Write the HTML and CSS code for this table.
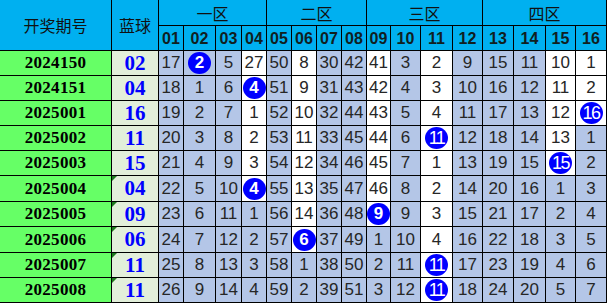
FILE: index.html
```html
<!DOCTYPE html>
<html lang="zh">
<head>
<meta charset="utf-8">
<link rel="stylesheet" href="styles.css">
</head>
<body>
<div class="sheet">
  <div class="h head-period">开奖期号</div>
  <div class="h head-blue">蓝球</div>
  <div class="h zone z1">一区</div>
  <div class="h zone z2">二区</div>
  <div class="h zone z3">三区</div>
  <div class="h zone z4">四区</div>
  <div class="h num">01</div><div class="h num">02</div><div class="h num">03</div><div class="h num">04</div>
  <div class="h num">05</div><div class="h num">06</div><div class="h num">07</div><div class="h num">08</div>
  <div class="h num">09</div><div class="h num">10</div><div class="h num">11</div><div class="h num">12</div>
  <div class="h num">13</div><div class="h num">14</div><div class="h num">15</div><div class="h num">16</div>

  <div class="p">2024150</div><div class="bl">02</div>
  <div class="c">17</div><div class="c"><span class="ball">2</span></div><div class="c">5</div><div class="c w">27</div>
  <div class="c">50</div><div class="c w">8</div><div class="c">30</div><div class="c">42</div>
  <div class="c w">41</div><div class="c">3</div><div class="c w">2</div><div class="c">9</div>
  <div class="c">15</div><div class="c">11</div><div class="c w">10</div><div class="c w">1</div>

  <div class="p">2024151</div><div class="bl">04</div>
  <div class="c">18</div><div class="c">1</div><div class="c">6</div><div class="c w"><span class="ball">4</span></div>
  <div class="c">51</div><div class="c w">9</div><div class="c">31</div><div class="c">43</div>
  <div class="c w">42</div><div class="c">4</div><div class="c w">3</div><div class="c">10</div>
  <div class="c">16</div><div class="c">12</div><div class="c w">11</div><div class="c w">2</div>

  <div class="p">2025001</div><div class="bl">16</div>
  <div class="c">19</div><div class="c">2</div><div class="c">7</div><div class="c w">1</div>
  <div class="c">52</div><div class="c w">10</div><div class="c">32</div><div class="c">44</div>
  <div class="c w">43</div><div class="c">5</div><div class="c w">4</div><div class="c">11</div>
  <div class="c">17</div><div class="c">13</div><div class="c w">12</div><div class="c w"><span class="ball two">16</span></div>

  <div class="p">2025002</div><div class="bl">11</div>
  <div class="c">20</div><div class="c">3</div><div class="c">8</div><div class="c w">2</div>
  <div class="c">53</div><div class="c w">11</div><div class="c">33</div><div class="c">45</div>
  <div class="c w">44</div><div class="c">6</div><div class="c w"><span class="ball two">11</span></div><div class="c">12</div>
  <div class="c">18</div><div class="c">14</div><div class="c w">13</div><div class="c">1</div>

  <div class="p">2025003</div><div class="bl">15</div>
  <div class="c">21</div><div class="c">4</div><div class="c">9</div><div class="c w">3</div>
  <div class="c">54</div><div class="c w">12</div><div class="c">34</div><div class="c">46</div>
  <div class="c w">45</div><div class="c">7</div><div class="c w">1</div><div class="c">13</div>
  <div class="c">19</div><div class="c">15</div><div class="c w"><span class="ball two">15</span></div><div class="c">2</div>

  <div class="p">2025004</div><div class="bl mark">04</div>
  <div class="c">22</div><div class="c">5</div><div class="c">10</div><div class="c w"><span class="ball">4</span></div>
  <div class="c">55</div><div class="c w">13</div><div class="c">35</div><div class="c">47</div>
  <div class="c w">46</div><div class="c">8</div><div class="c w">2</div><div class="c">14</div>
  <div class="c">20</div><div class="c">16</div><div class="c">1</div><div class="c">3</div>

  <div class="p">2025005</div><div class="bl mark">09</div>
  <div class="c">23</div><div class="c">6</div><div class="c">11</div><div class="c">1</div>
  <div class="c">56</div><div class="c w">14</div><div class="c">36</div><div class="c">48</div>
  <div class="c w"><span class="ball">9</span></div><div class="c">9</div><div class="c w">3</div><div class="c">15</div>
  <div class="c">21</div><div class="c">17</div><div class="c">2</div><div class="c">4</div>

  <div class="p">2025006</div><div class="bl mark">06</div>
  <div class="c">24</div><div class="c">7</div><div class="c">12</div><div class="c">2</div>
  <div class="c">57</div><div class="c w"><span class="ball">6</span></div><div class="c">37</div><div class="c">49</div>
  <div class="c">1</div><div class="c">10</div><div class="c w">4</div><div class="c">16</div>
  <div class="c">22</div><div class="c">18</div><div class="c">3</div><div class="c">5</div>

  <div class="p">2025007</div><div class="bl mark">11</div>
  <div class="c">25</div><div class="c">8</div><div class="c">13</div><div class="c">3</div>
  <div class="c">58</div><div class="c">1</div><div class="c">38</div><div class="c">50</div>
  <div class="c">2</div><div class="c">11</div><div class="c w"><span class="ball two">11</span></div><div class="c">17</div>
  <div class="c">23</div><div class="c">19</div><div class="c">4</div><div class="c">6</div>

  <div class="p">2025008</div><div class="bl mark">11</div>
  <div class="c">26</div><div class="c">9</div><div class="c">14</div><div class="c">4</div>
  <div class="c">59</div><div class="c">2</div><div class="c">39</div><div class="c">51</div>
  <div class="c">3</div><div class="c">12</div><div class="c w"><span class="ball two">11</span></div><div class="c">18</div>
  <div class="c">24</div><div class="c">20</div><div class="c">5</div><div class="c">7</div>
</div>
</body>
</html>
```
FILE: styles.css
```css
html, body {
  margin: 0;
  padding: 0;
  background: #ffffff;
}

.sheet {
  display: grid;
  grid-template-columns: 111px 46px 24px 31px 25px 24px 24px 24px 24px 24px 23px 29px 31px 29px 30px 31px 29px 30px;
  grid-template-rows: 25px 24px 24px 24px 24px 24px 24px 25px 24px 25px 24px 24px;
  gap: 1px;
  background: #000000;
  padding: 0 1px 1px 0;
  width: max-content;
}

.sheet > div {
  display: flex;
  align-items: center;
  justify-content: center;
  position: relative;
}

.h {
  background: #00b0f0;
  color: #111111;
  font-family: "Noto Sans CJK SC", "Liberation Sans", sans-serif;
  font-size: 16px;
}

.head-period {
  grid-row: 1 / 3;
  grid-column: 1;
}

.head-blue {
  grid-row: 1 / 3;
  grid-column: 2;
}

.z1 { grid-column: 3 / 7; }
.z2 { grid-column: 7 / 11; }
.z3 { grid-column: 11 / 15; }
.z4 { grid-column: 15 / 19; }

.h.num {
  font-family: "Liberation Sans", Arial, sans-serif;
  font-weight: bold;
  font-size: 16px;
  color: #10201f;
  padding-top: 1px;
}

.p {
  background: #66ff66;
  font-family: "Liberation Serif", "Times New Roman", serif;
  font-weight: bold;
  font-size: 17px;
  color: #000000;
  letter-spacing: 0.3px;
}

.bl {
  background: #e2efda;
  font-family: "Liberation Serif", "Times New Roman", serif;
  font-weight: bold;
  font-size: 21px;
  color: #0000ff;
}

.bl.mark::before {
  content: "";
  position: absolute;
  left: 0;
  top: 0;
  border-top: 5px solid #1f7a1f;
  border-right: 5px solid transparent;
}

.c {
  background: #b4c6e7;
  font-family: "Liberation Sans Narrow", "Liberation Sans", Arial, sans-serif;
  font-size: 17px;
  color: #262626;
}

.c.w {
  background: #ffffff;
}

.ball {
  width: 23px;
  height: 22px;
  border-radius: 50%;
  background: #0000ff;
  color: #ffffff;
  font-family: "Liberation Sans", Arial, sans-serif;
  font-weight: bold;
  font-size: 17px;
  display: flex;
  align-items: center;
  justify-content: center;
}

.ball.two {
  font-family: "Liberation Sans Narrow", "Liberation Sans", sans-serif;
  font-weight: normal;
  font-size: 18px;
  letter-spacing: -1.5px;
}
```
